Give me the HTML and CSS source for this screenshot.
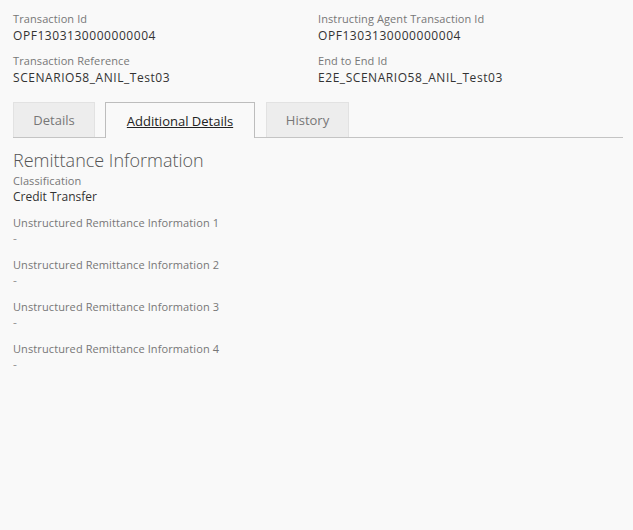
FILE: index.html
```html
<!DOCTYPE html>
<html>
<head>
<meta charset="utf-8">
<link rel="stylesheet" href="styles.css">
</head>
<body>
<div class="page">
  <div class="summary">
    <div class="field">
      <div class="label">Transaction Id</div>
      <div class="value wide">OPF1303130000000004</div>
    </div>
    <div class="field">
      <div class="label">Instructing Agent Transaction Id</div>
      <div class="value wide">OPF1303130000000004</div>
    </div>
    <div class="field">
      <div class="label">Transaction Reference</div>
      <div class="value wide">SCENARIO58_ANIL_Test03</div>
    </div>
    <div class="field">
      <div class="label">End to End Id</div>
      <div class="value wide">E2E_SCENARIO58_ANIL_Test03</div>
    </div>
  </div>

  <div class="tabs">
    <div class="tab">Details</div>
    <div class="tab active"><span>Additional Details</span></div>
    <div class="tab">History</div>
  </div>

  <div class="panel">
    <h2 class="heading">Remittance Information</h2>
    <div class="item first">
      <div class="label">Classification</div>
      <div class="value">Credit Transfer</div>
    </div>
    <div class="item">
      <div class="label">Unstructured Remittance Information 1</div>
      <div class="dash">-</div>
    </div>
    <div class="item">
      <div class="label">Unstructured Remittance Information 2</div>
      <div class="dash">-</div>
    </div>
    <div class="item">
      <div class="label">Unstructured Remittance Information 3</div>
      <div class="dash">-</div>
    </div>
    <div class="item">
      <div class="label">Unstructured Remittance Information 4</div>
      <div class="dash">-</div>
    </div>
  </div>
</div>
</body>
</html>
```

FILE: styles.css
```css
html, body {
  margin: 0;
  padding: 0;
  background: #f9f9f9;
}
body {
  width: 633px;
  height: 530px;
  font-family: "Open Sans", "DejaVu Sans", sans-serif;
}
.page {
  padding: 12px 10px 0 13px;
}
.summary {
  display: grid;
  grid-template-columns: 305px 1fr;
  row-gap: 10px;
}
.label {
  font-size: 11px;
  line-height: 14px;
  color: #777;
  letter-spacing: 0.1px;
}
.value {
  font-size: 12px;
  line-height: 17px;
  color: #333;
}
.summary .value {
  margin-top: 1px;
}
.value.wide {
  letter-spacing: 0.55px;
}
.tabs {
  display: flex;
  gap: 10px;
  margin-top: 16px;
  border-bottom: 1px solid #c4c4c4;
  height: 35px;
}
.tab {
  box-sizing: border-box;
  height: 35px;
  width: 82px;
  background: #ededed;
  border: 1px solid #e2e2e2;
  border-bottom: none;
  font-family: "Open Sans", sans-serif;
  font-size: 13px;
  color: #777;
  display: flex;
  align-items: center;
  justify-content: center;
}
.tab.active {
  width: 150px;
  height: 36px;
  background: #f9f9f9;
  border: 1px solid #bdbdbd;
  border-bottom: none;
  color: #222;
}
.tab.active span {
  text-decoration: underline;
}
.tab:last-child {
  width: 83px;
  margin-left: 1px;
}
.panel {
  padding-top: 12px;
}
.heading {
  margin: 0;
  font-size: 18px;
  line-height: 21px;
  font-weight: 300;
  color: #555;
}
.item {
  margin-top: 11px;
}
.item.first {
  margin-top: 3px;
}
.dash {
  font-size: 12px;
  line-height: 17px;
  color: #999;
}
```
